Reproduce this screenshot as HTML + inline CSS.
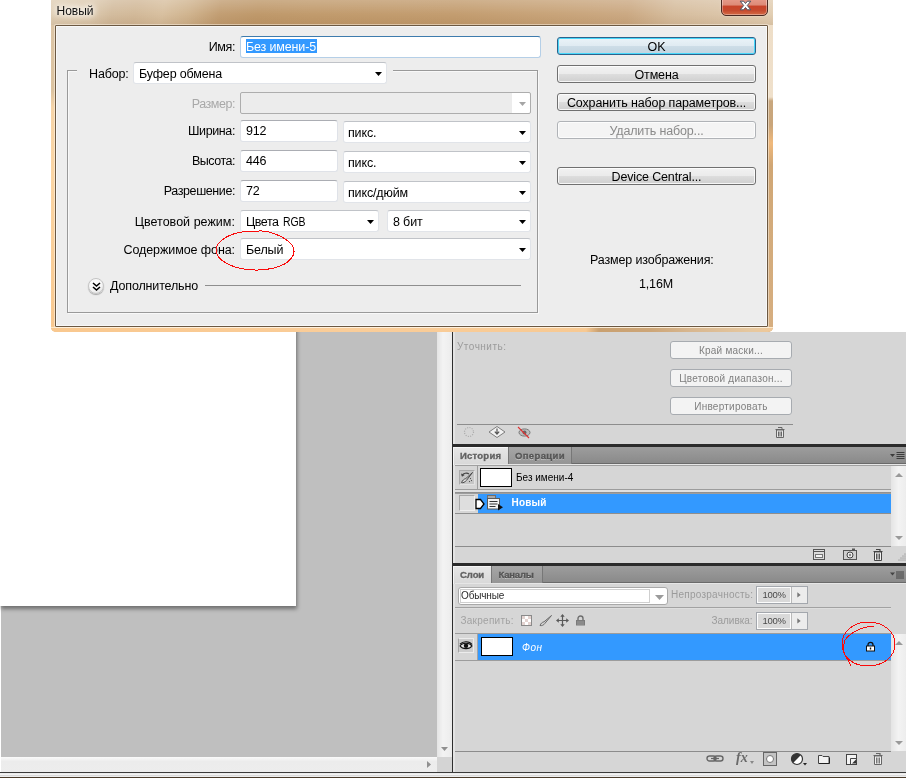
<!DOCTYPE html>
<html lang="ru"><head><meta charset="utf-8"><title>Новый</title>
<style>
html,body{margin:0;padding:0;background:#fff;}
body{width:906px;height:780px;position:relative;overflow:hidden;font-family:"Liberation Sans",sans-serif;font-size:12.5px;color:#000;}
.a{position:absolute;box-sizing:border-box;}
.t{position:absolute;white-space:nowrap;line-height:14px;letter-spacing:-0.15px;}
.lbl{position:absolute;white-space:nowrap;line-height:14px;text-align:right;right:671px;letter-spacing:-0.15px;}
/* photoshop workspace */
#ws{left:1px;top:332px;width:436px;height:425px;background:#bfbfbf;}
#doc{left:0;top:0;width:296px;height:606px;background:#fff;box-shadow:1px 3px 4px rgba(0,0,0,.42);}
#vsb{left:437px;top:332px;width:15px;height:425px;background:linear-gradient(90deg,#e4e4e4,#f3f3f3 40%,#ececec);}
#hsb{left:1px;top:757px;width:436px;height:15px;background:linear-gradient(180deg,#fafafa,#ececec 30%,#ededed);}
#sbc{left:437px;top:757px;width:15px;height:15px;background:#d4d4d4;}
#vline{left:452px;top:332px;width:1px;height:441px;background:#2e2e2e;}
#pn{left:453px;top:332px;width:453px;height:440px;background:#d6d6d6;}
.dark{background:#2b2b2b;}
.tabbar{background:linear-gradient(180deg,#9d9d9d,#8a8a8a);border-bottom:1px solid #6a6a6a;}
.tabA{background:linear-gradient(180deg,#e6e6e6,#d8d8d8);height:18px;border-left:1px solid #f6f6f6;border-top:1px solid #f6f6f6;}
.tabI{background:linear-gradient(180deg,#a6a6a6,#959595);border-left:1px solid #777;border-right:1px solid #777;height:17px;}
.tabtxt{position:absolute;font-weight:bold;font-size:9.5px;line-height:12px;white-space:nowrap;text-shadow:0 1px 0 rgba(255,255,255,.5);-webkit-text-stroke:0.35px currentColor;}
.pbtn{border:1px solid #a7abb0;border-radius:3px;background:#f3f3f3;color:#7f7f7f;font-size:10px;line-height:17px;text-align:center;}
.p{position:absolute;white-space:nowrap;font-size:10px;line-height:12px;}
.obox{width:52px;height:18px;border:1px solid #a3a7ad;background:#fcfcfc;}
.oval{width:32px;height:14px;background:#d9d9d9;}
.oarr{width:16px;height:16px;background:#ececec;border-left:1px solid #b9b9b9;}
.blue{background:#3399ff;}
/* dialog */
#dlg{left:51px;top:0;width:722px;height:332px;background:#d8c0a0;overflow:hidden;border-radius:0 0 5px 5px;}
#ttl{left:0;top:0;width:722px;height:26px;background:linear-gradient(180deg,rgba(255,255,255,.2),rgba(255,255,255,0) 55%,rgba(110,60,10,.11)),linear-gradient(100deg,#e0cfb6 0px,#dcc9ae 42px,#d3bc9e 62px,#d2b999 85px,#d8c0a0 112px,#d0b48f 138px,#c29e73 168px,#bf996b 205px,#c19b6d 260px,#c39d70 400px,#c8a47a 500px,#cba983 570px,#d6bd9e 615px,#dcc6aa 670px,#e3d0b5 722px);}
#fl{left:0;top:25px;width:4px;height:307px;background:linear-gradient(180deg,#dcc5a6 0px,#dcc3a0 66px,#f6d4a8 82px,#fbd5a4 150px,#f9c88f 307px);}
#fr{left:717px;top:25px;width:5px;height:307px;background:linear-gradient(180deg,#eedec8 0px,#efe0cb 72px,#c8a77e 76px,#c9a57a 100px,#f0b97c 118px,#d0a674 140px,#d3ab7b 200px,#d6ae80 307px);}
#fb{left:0;top:327px;width:722px;height:5px;background:linear-gradient(90deg,#f9c88f 0px,#facd99 300px,#f7c993 535px,#c9a070 548px,#cda678 600px,#d8b790 640px,#e6c8a0 700px,#f0c898 722px);box-shadow:inset 0 1px 0 rgba(255,240,215,.8);}
#client{left:55px;top:25px;width:713px;height:302px;background:#ededed;border:1px solid #6b5842;border-radius:1px;box-shadow:0 0 0 1px rgba(255,248,236,.5), inset 0 0 0 1px #f8f8f8;}
.inp{background:#fff;border:1px solid #dfe2e8;border-top-color:#abadb3;border-radius:3px;}
.dd{background:#fff;border:1px solid #e1e4e9;border-top-color:#c0c3c8;border-radius:3px;}
.arr{position:absolute;width:7px;height:4px;background:#000;clip-path:polygon(0 0,100% 0,50% 100%);}
.btn{border:1px solid #707070;border-radius:3px;background:linear-gradient(180deg,#f2f2f2 0%,#ebebeb 48%,#dddddd 52%,#cfcfcf 100%);box-shadow:inset 0 0 0 1px rgba(255,255,255,.8);text-align:center;line-height:18px;letter-spacing:-0.15px;}
</style></head><body><div id="root" style="position:absolute;left:0;top:0;width:906px;height:780px;will-change:transform">

<!-- workspace -->
<div class="a" id="ws"></div>
<div class="a" id="doc"></div>
<div class="a" id="vsb"></div>
<div class="a" id="hsb"></div>
<div class="a" id="sbc"></div>
<svg class="a" style="left:441px;top:747px" width="7" height="4"><path d="M0 0h7l-3.5 4z" fill="#909090"/></svg>
<svg class="a" style="left:427px;top:761px" width="4" height="7"><path d="M0 0v7l4-3.5z" fill="#909090"/></svg>
<div class="a" id="pn"></div>
<div class="a" id="vline"></div>

<!-- masks panel remnants -->
<div class="a" style="left:453px;top:332px;width:2px;height:440px;background:#e4e4e4"></div>
<div class="p" style="left:457px;top:341px;color:#9b9b9b;letter-spacing:0.49px">Уточнить:</div>
<div class="a pbtn" style="left:670px;top:341px;width:122px;height:18px;letter-spacing:0.23px">Край маски...</div>
<div class="a pbtn" style="left:670px;top:369px;width:122px;height:18px;letter-spacing:0.25px">Цветовой диапазон...</div>
<div class="a pbtn" style="left:670px;top:397px;width:122px;height:18px;letter-spacing:0.24px">Инвертировать</div>
<div class="a" style="left:457px;top:424px;width:336px;height:1px;background:#8d8d8d"></div>
<!-- mask icons -->
<svg class="a" style="left:463px;top:426px" width="12" height="12" viewBox="0 0 12 12"><circle cx="6" cy="6" r="4.5" fill="none" stroke="#a9a9a9" stroke-width="1.2" stroke-dasharray="1 1.35"/></svg>
<svg class="a" style="left:488px;top:425px" width="18" height="14" viewBox="0 0 18 14"><path d="M1 7L9 1.5 17 7 9 12.5z" fill="#f2f2f2" stroke="#7d7d7d" stroke-width="1"/><path d="M9 3.5v5M6.8 6.6L9 9l2.2-2.4" fill="none" stroke="#555" stroke-width="1.2"/></svg>
<svg class="a" style="left:517px;top:426px" width="14" height="13" viewBox="0 0 14 13"><ellipse cx="7.5" cy="6.5" rx="5.5" ry="3.6" fill="#bdbdbd" stroke="#777" stroke-width="1"/><circle cx="7.5" cy="6.5" r="2" fill="#666"/><path d="M1 1l11 11" stroke="#e03030" stroke-width="1.1"/></svg>
<svg class="a" style="left:775px;top:426px" width="10" height="12" viewBox="0 0 10 12"><path d="M1.5 4h7v7.5h-7z" fill="#e9e9e9" stroke="#666" stroke-width="1"/><path d="M0.5 3.5h9M3 1.5h4v2M3.5 5.5v5M6.5 5.5v5M5 5.5v5" fill="none" stroke="#666" stroke-width="1"/></svg>

<!-- history panel -->
<div class="a dark" style="left:453px;top:444px;width:453px;height:3px"></div>
<div class="a tabbar" style="left:453px;top:447px;width:453px;height:17px"></div>
<div class="a tabA" style="left:453px;top:447px;width:55px"></div>
<div class="a tabI" style="left:508px;top:447px;width:64px"></div>
<div class="tabtxt" style="left:460px;top:450px;color:#626262;letter-spacing:0.23px">История</div>
<div class="tabtxt" style="left:515px;top:450px;color:#555;letter-spacing:0.36px">Операции</div>
<svg class="a" style="left:890px;top:452px" width="15" height="8" viewBox="0 0 15 8"><path d="M0 2h5L2.5 5z" fill="#3c3c3c"/><path d="M6.5 0.5h8M6.5 2.5h8M6.5 4.5h8M6.5 6.5h8" stroke="#3c3c3c" stroke-width="1"/></svg>
<div class="a" style="left:455px;top:464px;width:451px;height:1px;background:#e6e6e6"></div>
<div class="a" style="left:455px;top:465px;width:451px;height:1px;background:#a0a0a0"></div>
<div class="a" style="left:477px;top:465px;width:1px;height:25px;background:#9c9c9c"></div>
<div class="a" style="left:891px;top:466px;width:15px;height:80px;background:linear-gradient(90deg,#e4e4e4,#f3f3f3 50%,#ededed)"></div>
<svg class="a" style="left:895px;top:473px" width="8" height="4"><path d="M0 4h8L4 0z" fill="#9a9a9a"/></svg>
<svg class="a" style="left:895px;top:536px" width="8" height="4"><path d="M0 0h8L4 4z" fill="#9a9a9a"/></svg>
<div class="a" style="left:459px;top:470px;width:16px;height:15px;border:1px solid #e2e2e2;border-top-color:#aaa;border-left-color:#aaa;background:#c6c6c6"></div>
<svg class="a" style="left:460px;top:471px" width="14" height="13" viewBox="0 0 14 13"><path d="M1.5 11.5c1.5.6 3.5-.4 5-2.2L12.5 1.5 5.8 7.6C4 8 2.600 9.400 1.500 11.500z" fill="#e8e8e8" stroke="#444" stroke-width="1"/><path d="M2 4.500c1.500-2.500 5-3 7-1.500" fill="none" stroke="#444" stroke-width="1.1"/><path d="M1 2.500l1 3.200 2.600-1.700z" fill="#444"/><path d="M10.500 7.500v.1M11.500 9.500v.1M9.500 10.500v.1" stroke="#555" stroke-width="1" stroke-linecap="square"/></svg>
<div class="a" style="left:480px;top:468px;width:32px;height:19px;border:1px solid #000;background:#fff"></div>
<div class="p" style="left:516px;top:472px;color:#000">Без имени-4</div>
<div class="a" style="left:455px;top:489px;width:436px;height:1px;background:#9c9c9c"></div>
<div class="a" style="left:455px;top:490px;width:436px;height:2px;background:#e0e0e0"></div>
<div class="a" style="left:455px;top:492px;width:436px;height:2px;background:linear-gradient(180deg,#8a8a8a,#a4a4a4)"></div>
<div class="a blue" style="left:478px;top:494px;width:413px;height:19px"></div>
<div class="a" style="left:455px;top:513px;width:436px;height:1px;background:#8e8e8e"></div>
<div class="a" style="left:459px;top:495px;width:16px;height:16px;border:1px solid #efefef;border-top-color:#a8a8a8;border-left-color:#a8a8a8;background:#dedede"></div>
<svg class="a" style="left:475px;top:498px" width="10" height="12" viewBox="0 0 10 12"><path d="M1 1.500h4.500L9 6 5.500 10.500H1z" fill="#fff" stroke="#000" stroke-width="1.300" stroke-linejoin="miter"/></svg>
<svg class="a" style="left:486px;top:494px" width="18" height="17" viewBox="0 0 18 17"><rect x="1.500" y="1.500" width="8" height="3" fill="#a9a9a9" stroke="#6f6f6f"/><rect x="1.500" y="4.500" width="12" height="10.500" fill="#f4f4f4" stroke="#5a5a5a"/><path d="M3.500 7.500h8M3.500 10h8M3.500 12.500h6" stroke="#333" stroke-width="1.200"/><path d="M12 10v6.500l5-3.200z" fill="#111"/></svg>
<div class="p" style="left:511.500px;top:497px;font-weight:bold;color:#fff;letter-spacing:0.16px">Новый</div>
<div class="a" style="left:455px;top:546px;width:436px;height:1px;background:#8c8c8c"></div>
<!-- history bottom icons -->
<svg class="a" style="left:813px;top:549px" width="12" height="11" viewBox="0 0 12 11"><rect x="0.500" y="0.500" width="11" height="10" fill="#dcdcdc" stroke="#555"/><path d="M0.500 2.500h11" stroke="#555"/><rect x="2.500" y="5.500" width="7" height="3" fill="#f4f4f4" stroke="#777"/></svg>
<svg class="a" style="left:843px;top:548px" width="15" height="12" viewBox="0 0 15 12"><rect x="0.500" y="2.500" width="13" height="9" fill="#cfcfcf" stroke="#555"/><rect x="9" y="0.500" width="3" height="2" fill="#555"/><circle cx="7" cy="7" r="3" fill="#efefef" stroke="#444"/><circle cx="7" cy="7" r="1.200" fill="#888"/></svg>
<svg class="a" style="left:873px;top:548px" width="10" height="13" viewBox="0 0 10 13"><path d="M1.500 4h7v8.500h-7z" fill="#f2f2f2" stroke="#444" stroke-width="1"/><path d="M0.500 3.500h9M3 1.500h4v2" fill="none" stroke="#444" stroke-width="1.200"/><path d="M3.500 5.500v6M6.500 5.500v6M5 5.500v6" stroke="#555" stroke-width="1"/></svg>
<svg class="a" style="left:897px;top:553px" width="9" height="9" viewBox="0 0 9 9"><path d="M8 1v.1M6 3v.1M8 3v.1M4 5v.1M6 5v.1M8 5v.1M2 7v.1M4 7v.1M6 7v.1M8 7v.1" stroke="#8a8a8a" stroke-width="1" stroke-linecap="square"/></svg>

<!-- layers panel -->
<div class="a dark" style="left:453px;top:563px;width:453px;height:3px"></div>
<div class="a tabbar" style="left:453px;top:566px;width:453px;height:17px"></div>
<div class="a tabA" style="left:453px;top:566px;width:38px"></div>
<div class="a tabI" style="left:491px;top:566px;width:52px"></div>
<div class="tabtxt" style="left:460px;top:569px;color:#626262;letter-spacing:-0.07px">Слои</div>
<div class="tabtxt" style="left:498.500px;top:569px;color:#555;letter-spacing:-0.2px">Каналы</div>
<svg class="a" style="left:890px;top:571px" width="15" height="8" viewBox="0 0 15 8"><path d="M0 1.500h5L2.500 4.500z" fill="#444"/><path d="M6 1h8M6 3h8M6 5h8M6 7h8" stroke="#444" stroke-width="1"/></svg>
<div class="a" style="left:455px;top:583px;width:451px;height:1px;background:#e6e6e6"></div>
<div class="a" style="left:458px;top:587px;width:210px;height:18px;border:1px solid #a9a9a9;border-radius:3px;background:#fff"></div>
<div class="a" style="left:460px;top:589px;width:190px;height:14px;border:1px solid #cfcfcf;background:#fff"></div>
<svg class="a" style="left:655px;top:595px" width="9" height="5"><path d="M0 0h9L4.500 5z" fill="#9b9b9b"/></svg>
<div class="p" style="left:461px;top:590px;color:#2a2a2a;letter-spacing:-0.15px">Обычные</div>
<div class="p" style="left:671px;top:589px;color:#9b9b9b;letter-spacing:0.25px">Непрозрачность:</div>
<div class="a obox" style="left:756px;top:586px"></div><div class="a oval" style="left:758px;top:588px"></div><div class="a oarr" style="left:791px;top:587px"></div>
<svg class="a" style="left:797px;top:592px" width="4" height="6"><path d="M0.3 0.3v5.2l3.4-2.6z" fill="#777"/></svg>
<div class="p" style="left:762.5px;top:589px;color:#4a4a4a;font-size:9.5px;letter-spacing:-0.3px">100%</div>
<div class="a" style="left:455px;top:607px;width:436px;height:1px;background:#a2a2a2"></div><div class="a" style="left:455px;top:608px;width:436px;height:1px;background:#dedede"></div>
<div class="p" style="left:460.500px;top:615px;color:#a2a2a2;letter-spacing:0.26px">Закрепить:</div>
<div class="p" style="left:711.500px;top:615px;color:#9b9b9b;letter-spacing:-0.03px">Заливка:</div>
<div class="a obox" style="left:756px;top:612px"></div><div class="a oval" style="left:758px;top:614px"></div><div class="a oarr" style="left:791px;top:613px"></div>
<svg class="a" style="left:797px;top:618px" width="4" height="6"><path d="M0.3 0.3v5.2l3.4-2.6z" fill="#777"/></svg>
<div class="p" style="left:762.5px;top:615px;color:#4a4a4a;font-size:9.5px;letter-spacing:-0.3px">100%</div>
<!-- lock icons -->
<svg class="a" style="left:521px;top:615px" width="12" height="12" viewBox="0 0 12 12"><rect x="1" y="1" width="10" height="10" fill="#b0b0b0" opacity=".6"/><rect x="0.500" y="0.500" width="10" height="10" fill="#fff" stroke="#8a8a8a"/><path d="M1 1h3v3h-3zM7 1h3v3h-3zM4 4h3v3h-3zM1 7h3v3h-3zM7 7h3v3h-3z" fill="#e3d3d0"/></svg>
<svg class="a" style="left:539px;top:614px" width="14" height="13" viewBox="0 0 14 13"><path d="M1 11.500c1.800.5 3.600-.3 4.800-2L12.500 1.500 5 7.800C3 8.200 1.800 9.500 1 11.500z" fill="#cfcfcf" stroke="#6a6a6a" stroke-width="1"/></svg>
<svg class="a" style="left:556px;top:614px" width="13" height="13" viewBox="0 0 13 13"><path d="M6.500 1.500v10M1.500 6.500h10" stroke="#5a5a5a" stroke-width="1.200"/><path d="M6.500 0l2.200 2.800h-4.400zM6.500 13l2.200-2.800h-4.400zM0 6.500l2.800-2.200v4.400zM13 6.500l-2.800-2.200v4.400z" fill="#5a5a5a"/></svg>
<svg class="a" style="left:575px;top:615px" width="11" height="11" viewBox="0 0 11 11"><path d="M3 5V3.500a2.500 2.500 0 0 1 5 0V5" fill="none" stroke="#6e6e6e" stroke-width="1.400"/><rect x="1" y="5" width="9" height="5.500" fill="#7a7a7a"/><path d="M2 7h7M2 9h7" stroke="#a5a5a5" stroke-width=".8"/></svg>

<div class="a" style="left:455px;top:633px;width:436px;height:1px;background:#9c9c9c"></div><div class="a" style="left:477px;top:634px;width:1px;height:26px;background:#a4a4a4"></div>
<div class="a blue" style="left:478px;top:634px;width:413px;height:26px"></div>
<div class="a" style="left:455px;top:660px;width:436px;height:1px;background:#9c9c9c"></div>
<div class="a" style="left:458px;top:638px;width:16px;height:15px;border:1px solid #ececec;background:#a5a5a5;border-left-color:#a5a5a5;background:#cdcdcd"></div>
<svg class="a" style="left:459px;top:640px" width="14" height="11" viewBox="0 0 14 11"><path d="M1 6C3 2.500 10.500 2 13 6 10.500 9.500 3.500 9.500 1 6z" fill="#e6e6e6" stroke="#111" stroke-width="1.100"/><circle cx="7" cy="5.800" r="2.200" fill="#111"/><path d="M1 4.200C4 .8 10.500 1 13 4.500" fill="none" stroke="#111" stroke-width="1.200"/></svg>
<div class="a" style="left:481px;top:637px;width:32px;height:19px;border:1px solid #000;background:#fff"></div>
<div class="p" style="left:522px;top:642px;font-style:italic;color:#fff;letter-spacing:0.49px">Фон</div>
<svg class="a" style="left:865px;top:641px" width="11" height="11" viewBox="0 0 11 11"><path d="M3 5V3.800a2.500 2.500 0 0 1 5 0V5" fill="none" stroke="#111" stroke-width="1.300"/><rect x="1.500" y="5" width="8" height="5" fill="#fff" stroke="#111" stroke-width="1"/><rect x="4.800" y="6.500" width="1.400" height="2" fill="#111"/></svg>
<div class="a" style="left:891px;top:634px;width:15px;height:117px;background:linear-gradient(90deg,#e4e4e4,#f3f3f3 50%,#ededed)"></div>
<svg class="a" style="left:895px;top:641px" width="8" height="4"><path d="M0 4h8L4 0z" fill="#9a9a9a"/></svg>
<svg class="a" style="left:895px;top:741px" width="8" height="4"><path d="M0 0h8L4 4z" fill="#9a9a9a"/></svg>
<div class="a" style="left:455px;top:751px;width:436px;height:1px;background:#8c8c8c"></div>
<!-- layers bottom icons -->
<svg class="a" style="left:706px;top:754px" width="18" height="9" viewBox="0 0 18 9"><rect x="1" y="2" width="9" height="5" rx="2.500" fill="none" stroke="#666" stroke-width="1.400"/><rect x="8" y="2" width="9" height="5" rx="2.500" fill="none" stroke="#666" stroke-width="1.400"/><path d="M5 4.500h8" stroke="#666" stroke-width="1.200"/></svg>
<div class="p" style="left:736px;top:750px;font-family:'Liberation Serif',serif;font-style:italic;font-weight:bold;font-size:14px;line-height:16px;color:#6a6a6a">fx</div>
<svg class="a" style="left:750px;top:761px" width="4" height="3"><path d="M0 0h4L2 3z" fill="#888"/></svg>
<svg class="a" style="left:763px;top:752px" width="14" height="14" viewBox="0 0 14 14"><rect x="0.500" y="0.500" width="13" height="13" fill="#c4c4c4" stroke="#666"/><circle cx="7" cy="7" r="3.500" fill="#fff" stroke="#777"/></svg>
<svg class="a" style="left:790px;top:752px" width="18" height="14" viewBox="0 0 18 14"><circle cx="7" cy="7" r="5.500" fill="#fff" stroke="#333" stroke-width="1.200"/><path d="M3.100 10.900A5.500 5.500 0 0 1 10.900 3.100z" fill="#333"/><path d="M13 11h4l-2 2.500z" fill="#222"/></svg>
<svg class="a" style="left:818px;top:754px" width="12" height="10" viewBox="0 0 12 10"><path d="M0.500 1.500h3.500l1 1h6v7h-10.500z" fill="#f2f2f2" stroke="#444"/><path d="M1 9.500h10.500v-6" fill="none" stroke="#222"/></svg>
<svg class="a" style="left:846px;top:754px" width="11" height="11" viewBox="0 0 11 11"><rect x="0.500" y="0.500" width="10" height="10" fill="#f4f4f4" stroke="#444"/><path d="M4.500 10.500v-6h6" fill="none" stroke="#444"/><path d="M6 9.500h4v-4z" fill="#333"/></svg>
<svg class="a" style="left:873px;top:752px" width="10" height="13" viewBox="0 0 10 13"><path d="M1.500 4h7v8.500h-7z" fill="#f2f2f2" stroke="#666" stroke-width="1"/><path d="M0.500 3.500h9M3 1.500h4v2" fill="none" stroke="#666" stroke-width="1.200"/><path d="M3.500 5.500v6M6.500 5.500v6M5 5.500v6" stroke="#777" stroke-width="1"/></svg>

<!-- bottom strip -->
<div class="a" style="left:0;top:772px;width:906px;height:1px;background:#3a3a3a"></div>
<div class="a" style="left:0;top:773px;width:906px;height:4px;background:linear-gradient(180deg,#e8e8e8,#f4f4f4 40%,#d8d8d8 60%,#f6f6f6)"></div>
<div class="a" style="left:0;top:777px;width:906px;height:1px;background:#4a3b2a"></div>

<!-- dialog -->
<div class="a" id="dlg"><div class="a" id="ttl"></div><div class="a" id="fl"></div><div class="a" id="fr"></div><div class="a" id="fb"></div></div>
<div class="a" id="client"></div>
<div class="t" style="left:56.5px;top:4px;font-size:12px;line-height:15px;letter-spacing:0;color:#111;text-shadow:0 0 6px #fff,0 0 6px #fff,0 0 10px #fff">Новый</div>

<div class="lbl" style="top:40px;letter-spacing:-0.4px">Имя:</div>
<div class="a inp" style="left:240px;top:36px;width:301px;height:22px;border-color:#b5cfe7;border-top-color:#3d7bad"></div>
<div class="a blue" style="left:246px;top:39px;width:71px;height:14px"></div>
<div class="t" style="left:246px;top:40px;color:#fff">Без имени-5</div>


<!-- group box -->
<div class="a" style="left:67px;top:70px;width:471px;height:243px;border:1px solid #999;box-shadow:inset 1px 1px 0 #f8f8f8, 1px 1px 0 #f8f8f8"></div>
<div class="a" style="left:77px;top:68px;width:316px;height:6px;background:#ededed"></div>
<div class="a dd" style="left:133px;top:62px;width:254px;height:22px"></div>
<div class="t" style="left:89px;top:67px">Набор:</div>
<div class="t" style="left:139px;top:67px">Буфер обмена</div>
<div class="arr" style="left:375px;top:72px"></div>

<div class="lbl" style="top:97px;color:#a8a8a8;letter-spacing:-0.45px">Размер:</div>
<div class="a" style="left:240px;top:92px;width:291px;height:22px;border:1px solid #adadad;border-radius:2px;background:#ececec"></div>
<div class="a" style="left:512px;top:93px;width:18px;height:20px;background:#fff;border-radius:0 2px 2px 0"></div>
<div class="arr" style="left:519px;top:102px;background:#a5a5a5"></div>

<div class="lbl" style="top:124px;letter-spacing:-0.38px">Ширина:</div>
<div class="a inp" style="left:240px;top:120px;width:98px;height:22px"></div>
<div class="t" style="left:246px;top:124px">912</div>
<div class="a dd" style="left:343px;top:121px;width:188px;height:22px"></div>
<div class="t" style="left:348px;top:126px">пикс.</div>
<div class="arr" style="left:519px;top:131px"></div>

<div class="lbl" style="top:154px;letter-spacing:-0.48px">Высота:</div>
<div class="a inp" style="left:240px;top:150px;width:98px;height:22px"></div>
<div class="t" style="left:246px;top:154px">446</div>
<div class="a dd" style="left:343px;top:151px;width:188px;height:22px"></div>
<div class="t" style="left:348px;top:156px">пикс.</div>
<div class="arr" style="left:519px;top:161px"></div>

<div class="lbl" style="top:184px;letter-spacing:-0.41px">Разрешение:</div>
<div class="a inp" style="left:240px;top:180px;width:98px;height:22px"></div>
<div class="t" style="left:246px;top:184px">72</div>
<div class="a dd" style="left:343px;top:181px;width:188px;height:22px"></div>
<div class="t" style="left:348px;top:186px">пикс/дюйм</div>
<div class="arr" style="left:519px;top:191px"></div>

<div class="lbl" style="top:215px;letter-spacing:0.03px">Цветовой режим:</div>
<div class="a dd" style="left:240px;top:210px;width:139px;height:22px"></div>
<div class="t" style="left:246px;top:215px;letter-spacing:-0.45px">Цвета <span style="display:inline-block;letter-spacing:-0.15px;transform:scaleX(.84);transform-origin:0 50%;margin-left:1px">RGB</span></div>
<div class="arr" style="left:367px;top:220px"></div>
<div class="a dd" style="left:387px;top:210px;width:144px;height:22px"></div>
<div class="t" style="left:393px;top:215px">8 бит</div>
<div class="arr" style="left:519px;top:220px"></div>

<div class="lbl" style="top:243px;letter-spacing:-0.08px">Содержимое фона:</div>
<div class="a dd" style="left:240px;top:238px;width:291px;height:22px"></div>
<div class="t" style="left:246px;top:243px">Белый</div>
<div class="arr" style="left:519px;top:248px"></div>

<div class="a" style="left:88px;top:278px;width:16px;height:16px;border-radius:8px;border:1px solid #c4c4c4;background:radial-gradient(circle at 40% 30%,#ffffff 0%,#f6f6f6 55%,#d4d4d4 100%);box-shadow:0 1px 1px rgba(0,0,0,.3)"></div>
<svg class="a" style="left:92px;top:282px" width="9" height="10" viewBox="0 0 9 10"><path d="M1 1l3.5 3 3.5-3M1 5l3.5 3 3.5-3" fill="none" stroke="#000" stroke-width="1.6"/></svg>
<div class="t" style="left:110px;top:279px">Дополнительно</div>
<div class="a" style="left:205px;top:285px;width:316px;height:1px;background:#8e8e8e"></div>

<!-- buttons -->
<div class="a btn" style="left:557px;top:37px;width:199px;height:18px;border-color:#2c628b;box-shadow:inset 0 0 0 1px #48d8fb;background:linear-gradient(180deg,#eaf3f8 0%,#e0ebf2 48%,#cddde7 52%,#c2d4e0 100%)">OK</div>
<div class="a btn" style="left:557px;top:65px;width:199px;height:18px">Отмена</div>
<div class="a btn" style="left:557px;top:93px;width:199px;height:18px">Сохранить набор параметров...</div>
<div class="a btn" style="left:557px;top:121px;width:199px;height:18px;border-color:#b0b3b7;background:#f4f4f4;color:#8a8a8a;box-shadow:inset 0 0 0 1px #fcfcfc">Удалить набор...</div>
<div class="a btn" style="left:557px;top:167px;width:199px;height:18px">Device Central...</div>
<div class="t" style="left:590px;top:253px">Размер изображения:</div>
<div class="t" style="left:639px;top:277px">1,16M</div>

<!-- close button -->
<div class="a" style="left:721px;top:-4px;width:47px;height:20px;border:1px solid #4b2a22;border-radius:0 0 5px 5px;background:linear-gradient(180deg,#e9a090 0%,#dd8a77 45%,#c8432a 50%,#c64a2e 75%,#d36b45 100%);box-shadow:inset 0 0 0 1px rgba(255,255,255,.35), 0 0 2px rgba(255,255,255,.6)"></div>
<svg class="a" style="left:739px;top:0px" width="13" height="12" viewBox="0 0 13 12"><path d="M1.2 1.2h3.4l1.9 2.3 1.9-2.3h3.4l-3.5 4.3 3.5 4.3h-3.4l-1.9-2.3-1.9 2.3h-3.4l3.5-4.3z" fill="#fff" stroke="#4e5564" stroke-width="1" stroke-linejoin="round"/></svg>

<!-- red annotations -->
<svg class="a" style="left:0;top:0" width="906" height="780" viewBox="0 0 906 780">
<path d="M253 232 C266 228 284 236 292 245 C298 254 290 264 274 268 C258 272 238 270 226 263 C214 256 213 247 222 240 C231 233 245 230 258 232" fill="none" stroke="#fa0a0a" stroke-width="1" shape-rendering="crispEdges"/>
<path d="M868 622 C884 622 895 632 895 644 C895 657 883 666 868 666 C853 666 842 657 842 644 C842 632 853 622 868 622 Z" fill="none" stroke="#fa0a0a" stroke-width="1" shape-rendering="crispEdges"/>
<path d="M874 626 C860 627 849 634 845 640 C842 648 844 656 848 660 L851 666" fill="none" stroke="#fa0a0a" stroke-width="1" shape-rendering="crispEdges"/>
</svg>
</div></body></html>
